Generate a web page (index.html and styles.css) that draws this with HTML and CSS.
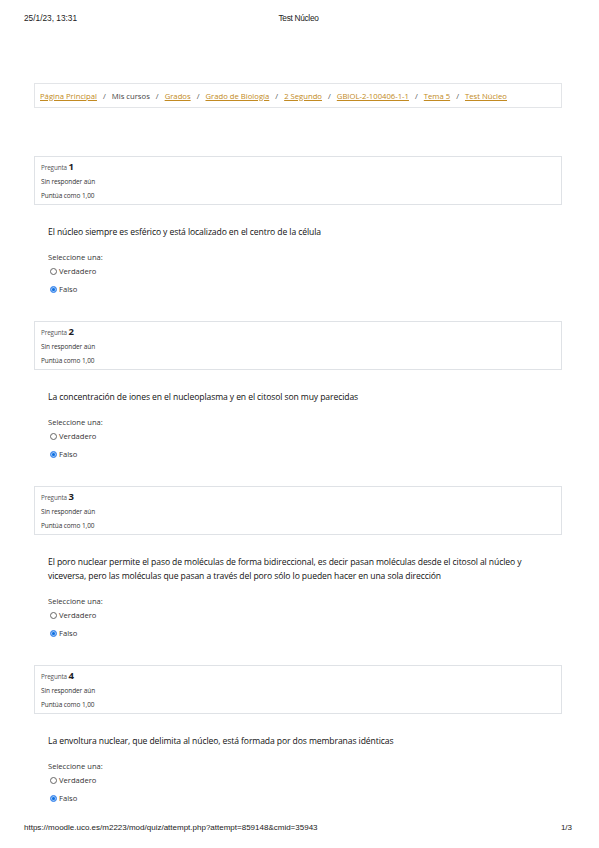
FILE: index.html
```html
<!DOCTYPE html>
<html lang="es">
<head>
<meta charset="utf-8">
<title>Test Núcleo</title>
<link rel="stylesheet" href="styles.css">
</head>
<body>
<header class="print-head">
  <span class="ph-left">25/1/23, 13:31</span>
  <span class="ph-center">Test Núcleo</span>
  <span class="ph-right"></span>
</header>

<main class="page">
  <nav class="breadcrumb">
    <a href="#">Página Principal</a><span class="sep">/</span>
    <span class="plain">Mis cursos</span><span class="sep">/</span>
    <a href="#">Grados</a><span class="sep">/</span>
    <a href="#">Grado de Biología</a><span class="sep">/</span>
    <a href="#">2 Segundo</a><span class="sep">/</span>
    <a href="#">GBIOL-2-100406-1-1</a><span class="sep">/</span>
    <a href="#">Tema 5</a><span class="sep">/</span>
    <a href="#">Test Núcleo</a>
  </nav>

  <section class="question first">
    <div class="info">
      <div class="qno"><span class="lbl">Pregunta</span> <b>1</b></div>
      <div class="state">Sin responder aún</div>
      <div class="grade">Puntúa como 1,00</div>
    </div>
    <div class="content">
      <p class="qtext">El núcleo siempre es esférico  y está localizado en el centro de la célula</p>
      <p class="prompt">Seleccione una:</p>
      <div class="opt"><span class="radio"></span>Verdadero</div>
      <div class="opt opt2"><span class="radio on"></span>Falso</div>
    </div>
  </section>

  <section class="question">
    <div class="info">
      <div class="qno"><span class="lbl">Pregunta</span> <b>2</b></div>
      <div class="state">Sin responder aún</div>
      <div class="grade">Puntúa como 1,00</div>
    </div>
    <div class="content">
      <p class="qtext">La concentración de iones en el nucleoplasma y en el citosol son muy parecidas</p>
      <p class="prompt">Seleccione una:</p>
      <div class="opt"><span class="radio"></span>Verdadero</div>
      <div class="opt opt2"><span class="radio on"></span>Falso</div>
    </div>
  </section>

  <section class="question">
    <div class="info">
      <div class="qno"><span class="lbl">Pregunta</span> <b>3</b></div>
      <div class="state">Sin responder aún</div>
      <div class="grade">Puntúa como 1,00</div>
    </div>
    <div class="content">
      <p class="qtext">El poro nuclear permite el paso de moléculas de forma bidireccional, es decir pasan moléculas desde el citosol al núcleo y<br>viceversa, pero las moléculas que pasan a través del poro sólo lo  pueden hacer en una sola dirección</p>
      <p class="prompt">Seleccione una:</p>
      <div class="opt"><span class="radio"></span>Verdadero</div>
      <div class="opt opt2"><span class="radio on"></span>Falso</div>
    </div>
  </section>

  <section class="question">
    <div class="info">
      <div class="qno"><span class="lbl">Pregunta</span> <b>4</b></div>
      <div class="state">Sin responder aún</div>
      <div class="grade">Puntúa como 1,00</div>
    </div>
    <div class="content">
      <p class="qtext">La envoltura nuclear, que delimita al núcleo, está formada por dos membranas idénticas</p>
      <p class="prompt">Seleccione una:</p>
      <div class="opt"><span class="radio"></span>Verdadero</div>
      <div class="opt opt2"><span class="radio on"></span>Falso</div>
    </div>
  </section>
</main>

<footer class="print-foot">
  <span class="pf-left">https://moodle.uco.es/m2223/mod/quiz/attempt.php?attempt=859148&amp;cmid=35943</span>
  <span class="pf-right">1/3</span>
</footer>
</body>
</html>
```

FILE: styles.css
```css
html, body {
  margin: 0;
  padding: 0;
  background: #fff;
}
body {
  width: 599px;
  height: 848px;
  position: relative;
  overflow: hidden;
  font-family: "Open Sans", "Liberation Sans", sans-serif;
  color: #1d2125;
}
p { margin: 0; }

.print-head {
  display: flex;
  justify-content: space-between;
  align-items: center;
  height: 12px;
  padding: 12px 24px 0 24px;
  font-family: "Liberation Sans", Arial, sans-serif;
  font-size: 8.3px;
  color: #222;
}
.ph-left, .ph-right { flex: 1; }
.ph-center { flex: 0 0 auto; letter-spacing: -0.3px; margin-right: 2px; }

.page {
  margin: 59px 37px 0 34px;
}

.breadcrumb {
  height: 23px;
  border: 1px solid #e3e5e8;
  display: flex;
  align-items: center;
  padding: 0 5px;
  font-size: 7.7px;
  white-space: nowrap;
  color: #444;
}
.breadcrumb a {
  color: #c28a22;
  text-decoration: underline;
}
.breadcrumb .sep {
  margin: 0 6px;
  color: #555;
}

.question { margin-top: 25px; }
.question.first { margin-top: 48px; }

.info {
  border: 1px solid #dfe2e6;
  padding: 3px 6px 1px 6px;
  font-size: 6.5px;
  line-height: 14px;
  color: #333;
  letter-spacing: -0.1px;
}
.info .qno b {
  font-size: 9.5px;
  font-weight: 700;
  color: #1d2125;
}
.info .lbl { font-size: 6.3px; color: #555; }

.content {
  padding-left: 14px;
}
.qtext {
  margin-top: 20px;
  font-size: 8.6px;
  line-height: 14px;
  color: #111;
  letter-spacing: -0.1px;
}
.prompt {
  margin-top: 11px;
  font-size: 7.6px;
  line-height: 14px;
  color: #333;
}
.opt {
  display: flex;
  align-items: center;
  font-size: 7.6px;
  line-height: 14px;
  color: #333;
  padding-left: 2px;
}
.opt2 { margin-top: 4px; }
.radio {
  width: 7px;
  height: 7px;
  border: 0.8px solid #666;
  border-radius: 50%;
  margin-right: 2px;
  box-sizing: border-box;
  background: #fff;
}
.radio.on {
  border: 1.6px solid #4a8ff0;
  background: #0b6fe0;
  box-shadow: inset 0 0 0 1px #9cc4f7;
}

.print-foot {
  position: absolute;
  left: 24px;
  right: 27px;
  top: 822px;
  display: flex;
  justify-content: space-between;
  font-family: "Liberation Sans", Arial, sans-serif;
  font-size: 8px;
  line-height: 12px;
  color: #222;
}
```
